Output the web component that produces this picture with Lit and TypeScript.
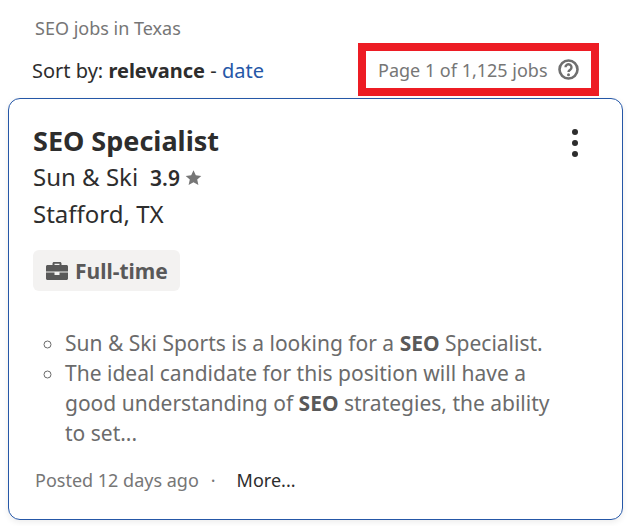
import { LitElement, html, css } from "lit"
import { customElement } from "lit/decorators.js"

@customElement("app-root")
export class AppRoot extends LitElement {
  static styles = css`
    :host {
      display: block;
      width: 631px;
      height: 526px;
      overflow: hidden;
      background: #fff;
      font-family: "Noto Sans", sans-serif;
      color: #2d2d2d;
    }
    .title {
      padding: 16px 0 0 35px;
      font-size: 18px;
      line-height: 24px;
      color: #767676;
    }
    .bar {
      display: flex;
      justify-content: space-between;
      align-items: flex-start;
      height: 58px;
      padding: 3px 32px 0 32px;
      box-sizing: border-box;
    }
    .sort {
      margin-top: 15px;
      font-size: 20px;
      line-height: 26px;
    }
    .sort a {
      color: #2557a7;
    }
    .count {
      display: flex;
      align-items: center;
      gap: 10px;
      box-sizing: border-box;
      width: 241px;
      height: 53px;
      padding-left: 12px;
      border: 8px solid #ed1c24;
      font-size: 18px;
      color: #767676;
    }
    .card {
      position: relative;
      box-sizing: border-box;
      width: 615px;
      height: 422px;
      margin-left: 8px;
      padding: 24px 24px 0;
      border: 1px solid #2557a7;
      border-radius: 12px;
      box-shadow: 0 2px 6px rgba(0, 0, 0, 0.08);
    }
    .job {
      margin: 0;
      font-size: 27px;
      line-height: 36px;
      font-weight: 700;
    }
    .company {
      display: flex;
      align-items: center;
      height: 34px;
      font-size: 24px;
      line-height: 34px;
      margin-top: 1px;
    }
    .rating {
      margin: 2px 0 0 12px;
      font-size: 21px;
      line-height: 28px;
      font-weight: 600;
    }
    .star {
      margin: 2px 0 0 5px;
    }
    .loc {
      font-size: 24px;
      line-height: 34px;
      margin-top: 3px;
    }
    .tag {
      display: inline-flex;
      align-items: center;
      gap: 7px;
      height: 41px;
      margin-top: 19px;
      padding: 0 12px 0 13px;
      border-radius: 6px;
      background: #f3f2f1;
      color: #595959;
      font-size: 21px;
      font-weight: 700;
    }
    .more-btn {
      position: absolute;
      top: 30px;
      right: 44px;
      display: flex;
      flex-direction: column;
      gap: 5px;
    }
    .more-btn span {
      width: 6px;
      height: 6px;
      border-radius: 50%;
      background: #2d2d2d;
    }
    ul {
      margin: 37px 0 0;
      padding: 0 0 0 32px;
      width: 490px;
      font-size: 21px;
      line-height: 30px;
      color: #6b6b6b;
      list-style: circle;
    }
    ul b {
      color: #595959;
    }
    .foot {
      display: flex;
      margin-top: 20px;
      font-size: 18px;
      line-height: 24px;
      color: #767676;
      padding-left: 2px;
    }
    .foot .dot {
      margin-left: 12px;
    }
    .foot .more {
      margin-left: 21px;
      color: #2d2d2d;
    }
  `

  render() {
    return html`
      <div class="title">SEO jobs in Texas</div>
      <div class="bar">
        <div class="sort">Sort by: <b>relevance</b> - <a>date</a></div>
        <div class="count">
          <span>Page 1 of 1,125 jobs</span>
          <svg width="21" height="21" viewBox="0 0 21 21" fill="none">
            <circle cx="10.500" cy="10.500" r="9" stroke="#6f6f6f" stroke-width="2.600" />
            <path d="M7.500 8.300a3 3 0 1 1 4.700 2.400c-1.100.7-1.700 1.100-1.700 2.300" stroke="#6f6f6f" stroke-width="2.400" />
            <circle cx="10.500" cy="15.700" r="1.500" fill="#6f6f6f" />
          </svg>
        </div>
      </div>
      <div class="card">
        <h2 class="job">SEO Specialist</h2>
        <div class="more-btn"><span></span><span></span><span></span></div>
        <div class="company">
          Sun &amp; Ski
          <span class="rating">3.9</span>
          <svg class="star" width="17" height="16" viewBox="0 0 16 16">
            <path d="M8 .3l2.300 5 5.500.6-4.100 3.700 1.200 5.500L8 12.300l-4.900 2.800 1.200-5.500L.2 5.900l5.500-.6z" fill="#767676" />
          </svg>
        </div>
        <div class="loc">Stafford, TX</div>
        <div class="tag">
          <svg width="22" height="18" viewBox="0 0 22 18">
            <path d="M6.500 3V1.500C6.500.7 7.200 0 8 0h6c.8 0 1.500.7 1.500 1.500V3h5c.8 0 1.500.7 1.500 1.500V9.500H0V4.500C0 3.700.7 3 1.500 3zM8.500 3h5V1.800h-5zM0 10.500h8.500V13h5v-2.500H22v6c0 .8-.7 1.500-1.500 1.500h-19C.7 18 0 17.300 0 16.500z" fill="#595959" fill-rule="evenodd" />
          </svg>
          Full-time
        </div>
        <ul>
          <li>Sun &amp; Ski Sports is a looking for a <b>SEO</b> Specialist.</li>
          <li>The ideal candidate for this position will have a good understanding of <b>SEO</b> strategies, the ability to set...</li>
        </ul>
        <div class="foot">
          <span>Posted 12 days ago</span>
          <span class="dot">·</span>
          <span class="more">More...</span>
        </div>
      </div>
    `
  }
}
